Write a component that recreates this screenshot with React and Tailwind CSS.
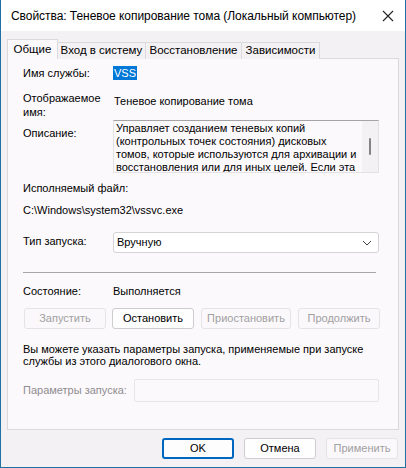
import React from "react";

const F = { fontFamily: '"Liberation Sans", Arial, sans-serif' };

function Btn({ children, disabled, w, primary }) {
  return (
    <div
      className={
        "h-[21px] flex items-center justify-center rounded-[3px] text-[11px] leading-none whitespace-nowrap " +
        (primary
          ? "border-2 border-[#0067c0] bg-[#fdfdfd] text-black"
          : disabled
          ? "border border-[#e6e3e6] bg-[#fbf8fb] text-[#a0a0a0]"
          : "border border-[#cfcccf] bg-[#fefefe] text-black")
      }
      style={{ width: w }}
    >
      {children}
    </div>
  );
}

export default function App() {
  return (
    <div
      className="w-[406px] h-[468px] bg-[#f4f1f4] border-l border-r border-b border-[#1f70a3] flex flex-col text-[11px] text-black whitespace-nowrap"
      style={F}
    >
      {/* Title bar */}
      <div className="h-[31px] bg-white flex items-center justify-between pl-[10px] pr-[10px]">
        <span className="text-[12px] tracking-[-0.05px]">Свойства: Теневое копирование тома (Локальный компьютер)</span>
        <svg width="12" height="12" viewBox="0 0 12 12" className="mr-[1px]">
          <path d="M1 1 L11 11 M11 1 L1 11" stroke="#222" strokeWidth="1.1" fill="none" />
        </svg>
      </div>

      {/* Tabs */}
      <div className="flex items-end pl-[6px] mt-[8px] h-[20px] relative z-10 text-[11.5px]">
        <div className="h-[20px] w-[51px] bg-[#fcf9fc] border border-b-0 border-[#dcd9dc] flex items-center justify-center">
          Общие
        </div>
        <div className="h-[17px] w-[88px] bg-[#f4f1f4] border border-l-0 border-b-0 border-[#dcd9dc] flex items-center justify-center">
          Вход в систему
        </div>
        <div className="h-[17px] w-[96px] bg-[#f4f1f4] border border-l-0 border-b-0 border-[#dcd9dc] flex items-center justify-center">
          Восстановление
        </div>
        <div className="h-[17px] w-[78px] bg-[#f4f1f4] border border-l-0 border-b-0 border-[#dcd9dc] flex items-center justify-center">
          Зависимости
        </div>
      </div>

      {/* Panel */}
      <div className="mx-[6px] h-[372px] -mt-[1px] bg-[#fcf9fc] border border-[#dcd9dc] flex flex-col pl-[15px] pr-[18px]">
        {/* Имя службы */}
        <div className="mt-[7px] h-[14px] flex items-center leading-[14px]">
          <div className="w-[90px]">Имя службы:</div>
          <span className="bg-[#0078d7] text-white px-[1px] leading-[14px]">VSS</span>
        </div>
        {/* Отображаемое имя */}
        <div className="mt-[11px] h-[28px] flex leading-[14px]">
          <div className="w-[90px]">
            Отображаемое
            <br />
            имя:
          </div>
          <div className="mt-[3px] pl-[1px]">Теневое копирование тома</div>
        </div>
        {/* Описание */}
        <div className="mt-[1px] h-[53px] flex">
          <div className="w-[90px] mt-[6px] leading-[14px]">Описание:</div>
          <div className="w-[266px] h-[53px] border border-[#e4e1e4] border-t-[#a6a3a6] flex overflow-hidden">
            <div className="flex-1 pl-[2px] pt-[1px] leading-[13px] overflow-hidden">
              Управляет созданием теневых копий
              <br />
              (контрольных точек состояния) дисковых
              <br />
              томов, которые используются для архивации и
              <br />
              восстановления или для иных целей. Если эта
            </div>
            <div className="w-[16px] shrink-0 bg-[#f3f1f3] flex justify-center pt-[17px]">
              <div className="w-[2px] h-[17px] bg-[#858385] rounded-[1px]" />
            </div>
          </div>
        </div>
        {/* Исполняемый файл */}
        <div className="mt-[8px] h-[14px] leading-[14px]">Исполняемый файл:</div>
        <div className="mt-[8px] h-[14px] leading-[14px]">C:\Windows\system32\vssvc.exe</div>
        {/* Тип запуска */}
        <div className="mt-[15px] h-[21px] flex items-center">
          <div className="w-[90px] -mt-[2px]">Тип запуска:</div>
          <div className="w-[266px] h-[21px] bg-white border border-[#d6d3d6] rounded-[3px] flex items-center justify-between pl-[3px] pr-[6px]">
            <span>Вручную</span>
            <svg width="10" height="6" viewBox="0 0 10 6">
              <path d="M1 1 L5 5 L9 1" stroke="#444" strokeWidth="1" fill="none" />
            </svg>
          </div>
        </div>
        {/* Separator */}
        <div className="mt-[19px] h-[1px] w-[353px] bg-[#a8a5a8]" />
        {/* Состояние */}
        <div className="mt-[11px] h-[14px] flex items-center leading-[14px]">
          <div className="w-[90px]">Состояние:</div>
          <div>Выполняется</div>
        </div>
        {/* Buttons */}
        <div className="mt-[10px] flex ml-[1px]">
          <Btn disabled w="82px">Запустить</Btn>
          <div className="ml-[6px]"><Btn w="82px">Остановить</Btn></div>
          <div className="ml-[7px]"><Btn disabled w="90px">Приостановить</Btn></div>
          <div className="ml-[7px]"><Btn disabled w="82px">Продолжить</Btn></div>
        </div>
        {/* Paragraph */}
        <div className="mt-[14px] h-[26px] leading-[12px]">
          Вы можете указать параметры запуска, применяемые при запуске
          <br />
          службы из этого диалогового окна.
        </div>
        {/* Параметры запуска */}
        <div className="mt-[10px] h-[23px] flex items-center">
          <div className="w-[111px] text-[#8f8c8f]">Параметры запуска:</div>
          <div className="w-[245px] h-[23px] border border-[#e8e5e8] rounded-[2px] bg-[#fcf9fc]" />
        </div>
      </div>

      {/* Footer */}
      <div className="mt-[8px] flex justify-end pr-[7px]">
        <Btn primary w="72px">OK</Btn>
        <div className="ml-[10px]"><Btn w="72px">Отмена</Btn></div>
        <div className="ml-[10px]"><Btn disabled w="72px">Применить</Btn></div>
      </div>
    </div>
  );
}
